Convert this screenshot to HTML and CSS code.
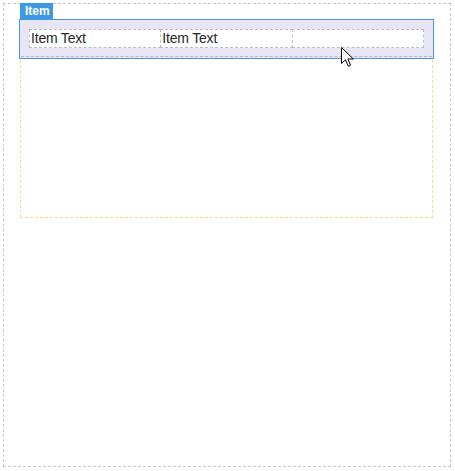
FILE: index.html
```html
<!DOCTYPE html>
<html>
<head>
<meta charset="utf-8">
<link rel="stylesheet" href="styles.css">
</head>
<body>
<div class="canvas">
  <div class="container">
    <span class="tag">Item</span>
    <div class="item">
      <div class="row">
        <div class="cell">Item Text</div>
        <div class="cell">Item Text</div>
        <div class="cell"></div>
      </div>
      <svg class="cursor" width="14" height="21" viewBox="0 0 14 21">
        <path d="M0.5 0.5 L0.5 16.5 L4.5 12.8 L7.3 19.3 L9.6 18.3 L6.9 12 L12.3 12 Z" fill="#fff" stroke="#000" stroke-width="1" stroke-linejoin="miter"/>
      </svg>
    </div>
  </div>
</div>
</body>
</html>
```
FILE: styles.css
```css
html, body {
  margin: 0;
  padding: 0;
  background: #fff;
}
body {
  padding: 3px;
  font-family: "Liberation Sans", Arial, sans-serif;
}
.canvas {
  border: 1px dashed #c8c8c8;
  padding: 16px 17px 0 16px;
  width: 413px;
  height: 446px;
}
.container {
  position: relative;
  height: 196px;
  border: 1px dashed #f2dc86;
}
.tag {
  position: absolute;
  left: -1px;
  top: -18px;
  height: 16px;
  line-height: 16px;
  padding: 0 3px 0 5px;
  background: #3d99e6;
  color: #fff;
  font-size: 12px;
  font-weight: bold;
}
.item {
  position: relative;
  background: #e6e6f4;
  border-bottom: 1px dashed #b8b8c4;
  padding: 8px;
  box-shadow: 0 0 0 1px #e6e6f4, 0 0 0 2px #4a94dc;
}
.row {
  display: flex;
  height: 19px;
}
.cell {
  flex: 1;
  background: #fff;
  border: 1px dashed #bdbdbd;
  font-size: 14px;
  line-height: 17px;
  color: #262626;
  padding-left: 1px;
  white-space: nowrap;
  letter-spacing: -0.2px;
}
.cell + .cell {
  margin-left: -1px;
}
.cursor {
  position: absolute;
  left: 320px;
  top: 26px;
}
```
